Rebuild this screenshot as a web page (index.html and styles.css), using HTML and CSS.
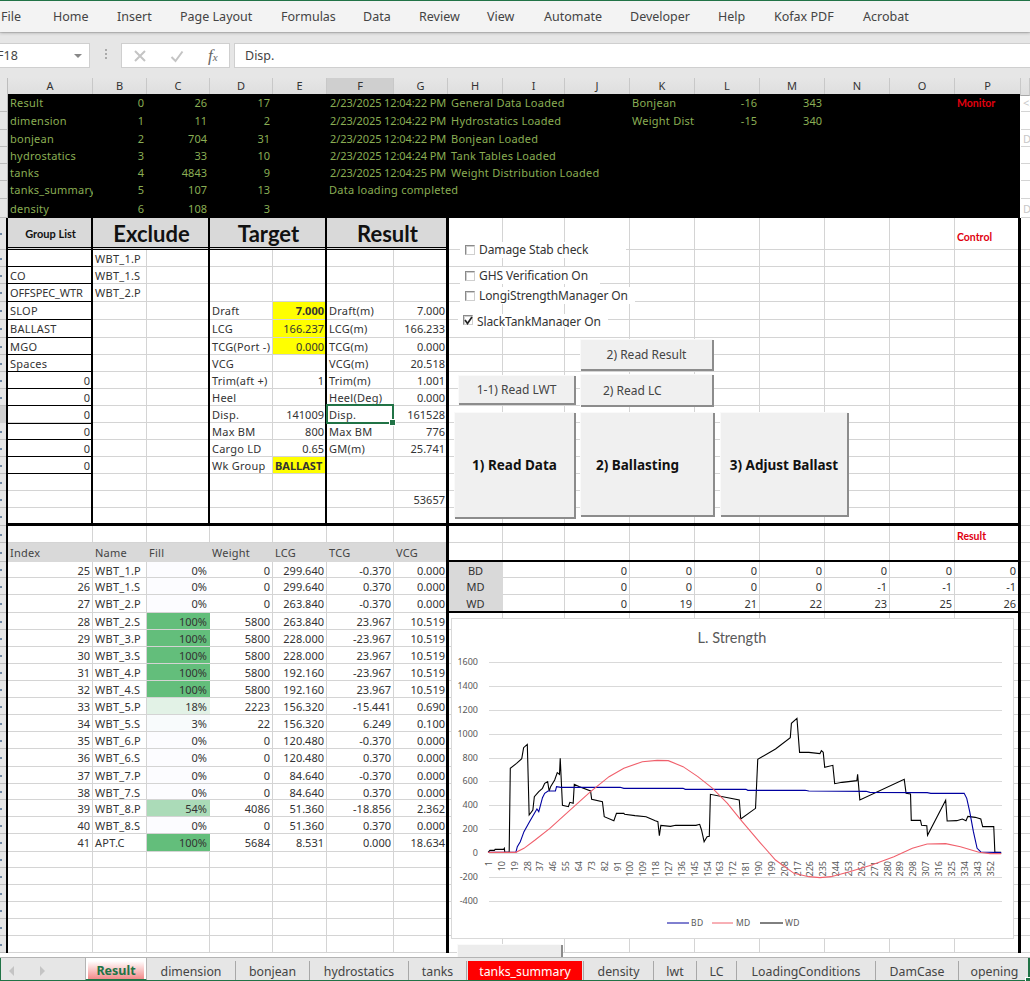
FILE: index.html
```html
<!DOCTYPE html>
<html lang="en">
<head>
<meta charset="utf-8">
<title>Result</title>
<link rel="stylesheet" href="styles.css">
</head>
<body>
<div class="page">
  <nav class="ribbon">
    <span class="rt t1">File</span><span class="rt t2">Home</span><span class="rt t3">Insert</span><span class="rt t4">Page Layout</span><span class="rt t5">Formulas</span><span class="rt t6">Data</span><span class="rt t7">Review</span><span class="rt t8">View</span><span class="rt t9">Automate</span><span class="rt t10">Developer</span><span class="rt t11">Help</span><span class="rt t12">Kofax PDF</span><span class="rt t13">Acrobat</span>
  </nav>
  <div class="fbar">
    <div class="namebox"><span class="nm">F18</span><i class="caret"></i></div>
    <div class="dots"></div>
    <div class="fxbox">
      <svg class="fxi" width="14" height="14" viewBox="0 0 14 14"><path d="M2 2L12 12M12 2L2 12" stroke="#c4c4c4" stroke-width="2" fill="none"/></svg>
      <svg class="fxi" width="14" height="14" viewBox="0 0 14 14"><path d="M1.500 8L5.500 12L12.500 2.500" stroke="#c4c4c4" stroke-width="2" fill="none"/></svg>
      <span class="fx">f<small>x</small></span>
    </div>
    <div class="finput">Disp.</div>
  </div>

  <div class="sheet">
    <div class="cols">
      <b class="corner"></b><b>A</b><b>B</b><b>C</b><b>D</b><b>E</b><b class="on">F</b><b>G</b><b>H</b><b>I</b><b>J</b><b>K</b><b>L</b><b>M</b><b>N</b><b>O</b><b>P</b><b></b>
    </div>

    <section class="monitor">
      <div class="row r18 k"><span class="a">Result</span><span class="b n">0</span><span class="c n">26</span><span class="d n">17</span><span class="f s2 dt">2/23/2025 12:04:22 PM</span><span class="h s3">General Data Loaded</span><span class="k1">Bonjean</span><span class="l n">-16</span><span class="m n">343</span><span class="p mon">Monitor</span><span class="q gh">&lt;I</span></div>
      <div class="row r18 k"><span class="a">dimension</span><span class="b n">1</span><span class="c n">11</span><span class="d n">2</span><span class="f s2 dt">2/23/2025 12:04:22 PM</span><span class="h s3">Hydrostatics Loaded</span><span class="k1">Weight Distribution</span><span class="l n">-15</span><span class="m n">340</span><span class="q"></span></div>
      <div class="row r17 k"><span class="a">bonjean</span><span class="b n">2</span><span class="c n">704</span><span class="d n">31</span><span class="f s2 dt">2/23/2025 12:04:22 PM</span><span class="h s3">Bonjean Loaded</span><span class="q gh">D</span></div>
      <div class="row r17 k"><span class="a">hydrostatics</span><span class="b n">3</span><span class="c n">33</span><span class="d n">10</span><span class="f s2 dt">2/23/2025 12:04:24 PM</span><span class="h s3">Tank Tables Loaded</span><span class="q"></span></div>
      <div class="row r17 k"><span class="a">tanks</span><span class="b n">4</span><span class="c n">4843</span><span class="d n">9</span><span class="f s2 dt">2/23/2025 12:04:25 PM</span><span class="h s4">Weight Distribution Loaded</span><span class="q"></span></div>
      <div class="row r18 k"><span class="a">tanks_summary</span><span class="b n">5</span><span class="c n">107</span><span class="d n">13</span><span class="f s3">Data loading completed</span><span class="q"></span></div>
      <div class="row r19 k"><span class="a">density</span><span class="b n">6</span><span class="c n">108</span><span class="d n">3</span><span class="q gh">D</span></div>
    </section>

    <div class="body">
      <section class="mid">
        <div class="row r32"><span class="a hd sm">Group List</span><span class="b s2 hd">Exclude</span><span class="d s2 hd">Target</span><span class="f s2 hd">Result</span><span class="p ctl">Control</span></div>
        <div class="row r17"><span class="a lb"></span><span class="b">WBT_1.P</span></div>
        <div class="row r17"><span class="a lb">CO</span><span class="b">WBT_1.S</span></div>
        <div class="row r18"><span class="a lb up">OFFSPEC_WTR</span><span class="b">WBT_2.P</span></div>
        <div class="row r18"><span class="a lb">SLOP</span><span class="d">Draft</span><span class="e n y st">7.000</span><span class="f">Draft(m)</span><span class="g n">7.000</span></div>
        <div class="row r18"><span class="a lb">BALLAST</span><span class="d">LCG</span><span class="e n y">166.237</span><span class="f">LCG(m)</span><span class="g n">166.233</span></div>
        <div class="row r17"><span class="a lb">MGO</span><span class="d">TCG(Port -)</span><span class="e n y">0.000</span><span class="f">TCG(m)</span><span class="g n">0.000</span></div>
        <div class="row r17"><span class="a lb">Spaces</span><span class="d">VCG</span><span class="f">VCG(m)</span><span class="g n">20.518</span></div>
        <div class="row r17"><span class="a lb n">0</span><span class="d">Trim(aft +)</span><span class="e n">1</span><span class="f">Trim(m)</span><span class="g n">1.001</span></div>
        <div class="row r17"><span class="a lb n">0</span><span class="d">Heel</span><span class="f">Heel(Deg)</span><span class="g n">0.000</span></div>
        <div class="row r17 sel"><span class="a lb n">0</span><span class="d">Disp.</span><span class="e n">141009</span><span class="f cur">Disp.</span><span class="g n">161528</span></div>
        <div class="row r17"><span class="a lb n">0</span><span class="d">Max BM</span><span class="e n">800</span><span class="f">Max BM</span><span class="g n">776</span></div>
        <div class="row r17"><span class="a lb n">0</span><span class="d">Cargo LD</span><span class="e n">0.65</span><span class="f">GM(m)</span><span class="g n">25.741</span></div>
        <div class="row r17"><span class="a lb n">0</span><span class="d">Wk Group</span><span class="e y st">BALLAST</span></div>
        <div class="row r17"></div>
        <div class="row r17"><span class="g n">53657</span></div>
        <div class="row r18"></div>
      </section>

      <section class="lower">
        <div class="row r17"><span class="p rd">Result</span></div>
        <div class="row r19"><span class="a gy">Index</span><span class="b gy">Name</span><span class="c gy">Fill</span><span class="d gy">Weight</span><span class="e gy">LCG</span><span class="f gy">TCG</span><span class="g gy">VCG</span><span class="h s9 bar"></span></div>
        <div class="row r16"><span class="a n">25</span><span class="b">WBT_1.P</span><span class="c n f0">0%</span><span class="d n">0</span><span class="e n">299.640</span><span class="f n">-0.370</span><span class="g n">0.000</span><span class="h gb">BD</span><span class="j n">0</span><span class="k2 n">0</span><span class="l n">0</span><span class="m n">0</span><span class="o1 n">0</span><span class="o n">0</span><span class="p n">0</span></div>
        <div class="row r17"><span class="a n">26</span><span class="b">WBT_1.S</span><span class="c n f0">0%</span><span class="d n">0</span><span class="e n">299.640</span><span class="f n">0.370</span><span class="g n">0.000</span><span class="h gb">MD</span><span class="j n">0</span><span class="k2 n">0</span><span class="l n">0</span><span class="m n">0</span><span class="o1 n">-1</span><span class="o n">-1</span><span class="p n">-1</span></div>
        <div class="row r18"><span class="a n">27</span><span class="b">WBT_2.P</span><span class="c n f0">0%</span><span class="d n">0</span><span class="e n">263.840</span><span class="f n">-0.370</span><span class="g n">0.000</span><span class="h gb">WD</span><span class="j n">0</span><span class="k2 n">19</span><span class="l n">21</span><span class="m n">22</span><span class="o1 n">23</span><span class="o n">25</span><span class="p n">26</span><span class="h s9 bar ov"></span></div>
        <div class="row r17"><span class="a n">28</span><span class="b">WBT_2.S</span><span class="c n f100">100%</span><span class="d n">5800</span><span class="e n">263.840</span><span class="f n">23.967</span><span class="g n">10.519</span></div>
        <div class="row r17"><span class="a n">29</span><span class="b">WBT_3.P</span><span class="c n f100">100%</span><span class="d n">5800</span><span class="e n">228.000</span><span class="f n">-23.967</span><span class="g n">10.519</span></div>
        <div class="row r17"><span class="a n">30</span><span class="b">WBT_3.S</span><span class="c n f100">100%</span><span class="d n">5800</span><span class="e n">228.000</span><span class="f n">23.967</span><span class="g n">10.519</span></div>
        <div class="row r17"><span class="a n">31</span><span class="b">WBT_4.P</span><span class="c n f100">100%</span><span class="d n">5800</span><span class="e n">192.160</span><span class="f n">-23.967</span><span class="g n">10.519</span></div>
        <div class="row r17"><span class="a n">32</span><span class="b">WBT_4.S</span><span class="c n f100">100%</span><span class="d n">5800</span><span class="e n">192.160</span><span class="f n">23.967</span><span class="g n">10.519</span></div>
        <div class="row r17"><span class="a n">33</span><span class="b">WBT_5.P</span><span class="c n f18">18%</span><span class="d n">2223</span><span class="e n">156.320</span><span class="f n">-15.441</span><span class="g n">0.690</span></div>
        <div class="row r17"><span class="a n">34</span><span class="b">WBT_5.S</span><span class="c n f3">3%</span><span class="d n">22</span><span class="e n">156.320</span><span class="f n">6.249</span><span class="g n">0.100</span></div>
        <div class="row r17"><span class="a n">35</span><span class="b">WBT_6.P</span><span class="c n f0">0%</span><span class="d n">0</span><span class="e n">120.480</span><span class="f n">-0.370</span><span class="g n">0.000</span></div>
        <div class="row r18"><span class="a n">36</span><span class="b">WBT_6.S</span><span class="c n f0">0%</span><span class="d n">0</span><span class="e n">120.480</span><span class="f n">0.370</span><span class="g n">0.000</span></div>
        <div class="row r17"><span class="a n">37</span><span class="b">WBT_7.P</span><span class="c n f0">0%</span><span class="d n">0</span><span class="e n">84.640</span><span class="f n">-0.370</span><span class="g n">0.000</span></div>
        <div class="row r16"><span class="a n">38</span><span class="b">WBT_7.S</span><span class="c n f0">0%</span><span class="d n">0</span><span class="e n">84.640</span><span class="f n">0.370</span><span class="g n">0.000</span></div>
        <div class="row r17"><span class="a n">39</span><span class="b">WBT_8.P</span><span class="c n f54">54%</span><span class="d n">4086</span><span class="e n">51.360</span><span class="f n">-18.856</span><span class="g n">2.362</span></div>
        <div class="row r17"><span class="a n">40</span><span class="b">WBT_8.S</span><span class="c n f0">0%</span><span class="d n">0</span><span class="e n">51.360</span><span class="f n">0.370</span><span class="g n">0.000</span></div>
        <div class="row r18"><span class="a n">41</span><span class="b">APT.C</span><span class="c n f100">100%</span><span class="d n">5684</span><span class="e n">8.531</span><span class="f n">0.000</span><span class="g n">18.634</span></div>
        <div class="row r16"></div>
        <div class="row r17"></div>
        <div class="row r17"></div>
        <div class="row r17"></div>
        <div class="row r17"></div>
        <div class="row r17"></div>
      </section>
    </div>

    <label class="chk c1"><i class="box"></i>Damage Stab check</label>
    <label class="chk c2"><i class="box"></i>GHS Verification On</label>
    <label class="chk c3"><i class="box"></i>LongiStrengthManager On</label>
    <label class="chk c4"><i class="box on"><svg width="9" height="9" viewBox="0 0 9 9"><path d="M1 4L3.500 7.500L8 1" stroke="#222" stroke-width="1.700" fill="none"/></svg></i>SlackTankManager On</label>

    <button class="btn b1">2) Read Result</button>
    <button class="btn b2">2) Read LC</button>
    <button class="btn b3">1-1) Read LWT</button>
    <button class="btn big b4">1) Read Data</button>
    <button class="btn big b5">2) Ballasting</button>
    <button class="btn big b6">3) Adjust Ballast</button>
    <button class="btn b7"></button>

    <figure class="chart">
      <svg width="563" height="321" viewBox="0 0 563 321">
        <g class="gl">
          <path d="M38 44H551M38 68H551M38 92H551M38 116H551M38 140H551M38 163H551M38 187H551M38 211H551M38 235H551M38 259H551M38 283H551"/>
        </g>
        <text class="ttl" x="281" y="25" text-anchor="middle">L. Strength</text>
        <g class="yl" text-anchor="end">
          <text x="27" y="47">1600</text><text x="27" y="71">1400</text><text x="27" y="95">1200</text><text x="27" y="119">1000</text><text x="27" y="143">800</text><text x="27" y="166">600</text><text x="27" y="190">400</text><text x="27" y="214">200</text><text x="27" y="238">0</text><text x="27" y="262">-200</text><text x="27" y="286">-400</text>
        </g>
        <g class="xl" text-anchor="end">
          <text transform="translate(41 243) rotate(-90)">1</text><text transform="translate(54 243) rotate(-90)">10</text><text transform="translate(67 243) rotate(-90)">19</text><text transform="translate(80 243) rotate(-90)">28</text><text transform="translate(92 243) rotate(-90)">37</text><text transform="translate(105 243) rotate(-90)">46</text><text transform="translate(118 243) rotate(-90)">55</text><text transform="translate(131 243) rotate(-90)">64</text><text transform="translate(144 243) rotate(-90)">73</text><text transform="translate(157 243) rotate(-90)">82</text><text transform="translate(170 243) rotate(-90)">91</text><text transform="translate(182 243) rotate(-90)">100</text><text transform="translate(195 243) rotate(-90)">109</text><text transform="translate(208 243) rotate(-90)">118</text><text transform="translate(221 243) rotate(-90)">127</text><text transform="translate(234 243) rotate(-90)">136</text><text transform="translate(247 243) rotate(-90)">145</text><text transform="translate(260 243) rotate(-90)">154</text><text transform="translate(272 243) rotate(-90)">163</text><text transform="translate(285 243) rotate(-90)">172</text><text transform="translate(298 243) rotate(-90)">181</text><text transform="translate(311 243) rotate(-90)">190</text><text transform="translate(324 243) rotate(-90)">199</text><text transform="translate(337 243) rotate(-90)">208</text><text transform="translate(350 243) rotate(-90)">217</text><text transform="translate(362 243) rotate(-90)">226</text><text transform="translate(375 243) rotate(-90)">235</text><text transform="translate(388 243) rotate(-90)">244</text><text transform="translate(401 243) rotate(-90)">253</text><text transform="translate(414 243) rotate(-90)">262</text><text transform="translate(427 243) rotate(-90)">271</text><text transform="translate(440 243) rotate(-90)">280</text><text transform="translate(452 243) rotate(-90)">289</text><text transform="translate(465 243) rotate(-90)">298</text><text transform="translate(478 243) rotate(-90)">307</text><text transform="translate(491 243) rotate(-90)">316</text><text transform="translate(504 243) rotate(-90)">325</text><text transform="translate(517 243) rotate(-90)">334</text><text transform="translate(530 243) rotate(-90)">343</text><text transform="translate(543 243) rotate(-90)">352</text>
        </g>
        <svg x="-1" y="-3" width="580" height="366" viewBox="0 0 1568 1098" preserveAspectRatio="none">
          <polyline class="ln" stroke="#000" points="103,712 108,706 120,706 122,703 145,703 147,700 148,712 160,712 163,460 180,445 194,431 199,398 209,388 214,600 224,585 228,545 240,530 250,520 256,505 264,500 268,528 272,515 283,495 290,473 296,478 298,430 304,571 320,575 324,562 333,565 336,508 350,515 380,528 383,553 412,560 417,605 443,617 450,595 470,595 472,598 500,602 530,605 555,617 562,620 566,662 570,631 596,634 610,631 665,631 675,628 680,645 687,680 695,665 701,664 704,538 782,555 786,612 826,580 832,433 880,402 920,368 923,325 938,310 945,412 970,412 1000,416 1004,407 1009,412 1013,457 1035,451 1040,506 1060,502 1100,497 1102,478 1108,555 1228,493 1233,535 1245,537 1247,616 1272,616 1275,631 1289,632 1291,661 1340,556 1344,618 1370,617 1385,612 1395,617 1400,604 1420,607 1435,612 1440,635 1470,635 1473,712 1490,712"/>
          <polyline class="ln" stroke="#0000a0" points="103,712 178,712 182,695 190,680 200,650 215,620 235,582 240,590 250,548 256,535 265,528 285,528 288,515 300,517 460,517 470,520 630,520 636,523 800,523 805,526 960,526 970,528 1125,529 1135,532 1290,533 1300,535 1390,535 1397,550 1405,590 1415,650 1425,700 1435,711 1490,713"/>
          <polyline class="ln" stroke="#f0606c" points="103,712 178,712 200,700 230,675 270,640 320,590 380,530 430,485 470,460 520,440 560,436 590,437 630,455 670,485 710,520 750,565 790,620 840,685 880,735 930,775 970,785 1000,788 1030,785 1080,770 1140,750 1200,725 1250,700 1290,687 1340,686 1380,695 1430,712 1460,716 1490,716"/>
        </svg>
        <g class="lg">
          <path d="M216 305H238" stroke="#0000a0"/><text x="240" y="308">BD</text>
          <path d="M261 305H282" stroke="#f0606c"/><text x="285" y="308">MD</text>
          <path d="M309 305H332" stroke="#000"/><text x="334" y="308">WD</text>
        </g>
      </svg>
    </figure>
  </div>

  <footer class="tabs">
    <i class="nav left"></i><i class="nav right"></i>
    <span class="tab cur">Result</span><span class="tab w1">dimension</span><span class="tab w2">bonjean</span><span class="tab w3">hydrostatics</span><span class="tab w4">tanks</span><span class="tab red">tanks_summary</span><span class="tab w5">density</span><span class="tab w6">lwt</span><span class="tab w7">LC</span><span class="tab w8">LoadingConditions</span><span class="tab w9">DamCase</span><span class="tab w10">opening</span>
  </footer>
</div>
</body>
</html>
```

FILE: styles.css
```css
* { box-sizing: border-box; }
html, body { margin: 0; padding: 0; background: #fff; }
.page { width: 1030px; height: 981px; overflow: hidden; display: flex; flex-direction: column; font-family: "Noto Sans", sans-serif; color: #333; }

/* ribbon */
.ribbon { height: 32px; flex: none; background: #f3f3f3; border-top: 1px solid #217346; box-shadow: 0 1px 3px rgba(0,0,0,.25); display: flex; align-items: center; font-size: 12.5px; color: #444; position: relative; z-index: 2; white-space: nowrap; }
.rt { display: block; flex: none; }
.t1 { width: 53px; padding-left: 1px; }
.t2 { width: 64px; }
.t3 { width: 63px; }
.t4 { width: 101px; }
.t5 { width: 82px; }
.t6 { width: 56px; }
.t7 { width: 68px; }
.t8 { width: 57px; }
.t9 { width: 86px; }
.t10 { width: 88px; }
.t11 { width: 56px; }
.t12 { width: 89px; }

/* formula bar */
.fbar { height: 46px; flex: none; background: #e6e6e6; border-top: 1px solid #d0d0d0; display: flex; align-items: flex-start; padding-top: 10px; }
.namebox { width: 90px; height: 25px; background: #fff; border: 1px solid #cfcfcf; border-left: 0; display: flex; align-items: center; font-size: 12.5px; color: #444; overflow: hidden; position: relative; }
.nm { margin-left: -3px; }
.caret { position: absolute; left: 74px; top: 10px; border: 4px solid transparent; border-top: 4px solid #888; border-bottom: 0; }
.dots { width: 2px; height: 12px; margin: 6px 14px 0 15px; background: repeating-linear-gradient(#aaa 0 2px, transparent 2px 4px); }
.fxbox { width: 109px; height: 25px; background: #fff; border: 1px solid #cfcfcf; display: flex; align-items: center; gap: 23px; padding-left: 11px; }
.fxi { flex: none; }
.fx { font-family: "Liberation Serif", serif; font-style: italic; font-size: 17px; color: #666; margin-left: 1px; }
.fx small { font-size: 11px; }
.finput { flex: 1; height: 25px; margin-left: 4px; background: #fff; border: 1px solid #cfcfcf; border-right: 0; font-size: 12.5px; line-height: 23px; padding-left: 10px; color: #444; }

/* sheet */
.sheet { flex: 1; position: relative; overflow: hidden; font-size: 11px; line-height: 16px; }
.cols, .row { display: grid; width: 1030px; grid-template-columns: [r] 8px [a] 85px [b] 54px [c] 63px [d] 63px [e] 54px [f] 67px [g] 54px [h] 55px [i] 62px [j] 65px [k] 65px [l] 65px [m] 65px [n] 65px [o] 65px [p] 66px [q] 9px; }
.cols { height: 16px; background: #e6e6e6; }
.cols b { font-weight: 400; font-size: 11px; line-height: 16px; text-align: center; color: #333; border-right: 1px solid #c8c8c8; border-bottom: 1px solid #a8a8a8; background: linear-gradient(#e6e6e6, #dedede); }
.cols .corner { background: #e6e6e6; border-right: 1px solid #bdbdbd; }
.cols .on { background: #cfcfcf; border-bottom: 2px solid #217346; }

.monitor, .body { background-color: #fff; }
.body { position: relative; background-image: linear-gradient(#d4d4d4,#d4d4d4), linear-gradient(#d4d4d4,#d4d4d4), linear-gradient(#d4d4d4,#d4d4d4), linear-gradient(#d4d4d4,#d4d4d4), linear-gradient(#d4d4d4,#d4d4d4), linear-gradient(#d4d4d4,#d4d4d4), linear-gradient(#d4d4d4,#d4d4d4), linear-gradient(#d4d4d4,#d4d4d4), linear-gradient(#d4d4d4,#d4d4d4), linear-gradient(#d4d4d4,#d4d4d4), linear-gradient(#d4d4d4,#d4d4d4), linear-gradient(#d4d4d4,#d4d4d4), linear-gradient(#d4d4d4,#d4d4d4), linear-gradient(#d4d4d4,#d4d4d4), linear-gradient(#d4d4d4,#d4d4d4); background-repeat: no-repeat; background-size: 1px 100%; background-position: 92px 0, 146px 0, 209px 0, 272px 0, 326px 0, 393px 0, 447px 0, 502px 0, 564px 0, 629px 0, 694px 0, 759px 0, 824px 0, 889px 0, 954px 0; }
.body::after { content: ""; position: absolute; inset: 0; pointer-events: none; background-image: linear-gradient(#000,#000), linear-gradient(#000,#000), linear-gradient(#000,#000); background-repeat: no-repeat; background-size: 2px 100%, 3px 100%, 3px 100%; background-position: 6px 0, 446px 0, 1018px 0; }
.mid { position: relative; }
.mid::after { content: ""; position: absolute; inset: 0; pointer-events: none; z-index: 1; background-image: linear-gradient(#000,#000), linear-gradient(#000,#000), linear-gradient(#000,#000), linear-gradient(#000,#000); background-repeat: no-repeat; background-size: 2px 100%, 2px 100%, 2px 100%, 1015px 3px; background-position: 91px 0, 208px 0, 325px 0, 6px 100%; }

.row { border-bottom: 1px solid #d4d4d4; position: relative; }
.row::before { content: ""; grid-column: r; grid-row: 1; background: linear-gradient(#7089a6,#7089a6) 0 50% / 2px 2px no-repeat #e6e6e6; border-right: 1px solid #b8b8b8; margin-bottom: -1px; box-shadow: inset 0 -1px 0 #bdbdbd; }
.r16 { height: 16px; }
.r17 { height: 17px; }
.r18 { height: 18px; }
.r19 { height: 19px; }
.r32 { height: 32px; }

.row > span { grid-row: 1; display: block; overflow: hidden; white-space: nowrap; padding: 1px 2px 0; align-self: stretch; line-height: 16px; letter-spacing: .25px; }
.row.r19 > span { padding-top: 2px; }
.a { grid-column-start: a; }
.b { grid-column-start: b; }
.c { grid-column-start: c; }
.d { grid-column-start: d; }
.e { grid-column-start: e; }
.f { grid-column-start: f; }
.g { grid-column-start: g; }
.h { grid-column-start: h; }
.j { grid-column-start: j; }
.k1, .k2 { grid-column-start: k; }
.l { grid-column-start: l; }
.m { grid-column-start: m; }
.o1 { grid-column-start: n; }
.o { grid-column-start: o; }
.p { grid-column-start: p; }
.q { grid-column-start: q; }
.s2 { grid-column-end: span 2; }
.s3 { grid-column-end: span 3; }
.s4 { grid-column-end: span 4; }
.s9 { grid-column-end: span 9; }
.row > .n { text-align: right; letter-spacing: 0; padding-right: 3px; }
.row > .p.n { padding-right: 5px; }
.row > .dt { letter-spacing: -.1px; padding-left: 3px; }
.row > .up { letter-spacing: -.1px; }
.k > .h { padding-left: 3px; }

/* black monitor block */
.k { border-bottom: 0; color: #8aae54; background: linear-gradient(#000,#000) 0 0 / 1020px 100% no-repeat; }
.k::before { background: #e6e6e6; margin-bottom: 0; }
.row > .q { padding: 1px 0 0 2px; }
.k .q { border-bottom: 1px solid #d4d4d4; color: #c8c8c8; }
.row > .mon, .row > .ctl, .row > .rd { font-family: Lato, sans-serif; font-weight: 700; font-size: 10.500px; color: #e0000f; padding-left: 2px; letter-spacing: 0; }
.row > .ctl { line-height: 36px; }
.row > .rd { padding-top: 2px; }

/* headed block */
.row > .hd { background: #d9d9d9; font-family: Lato, sans-serif; font-weight: 700; font-size: 22px; line-height: 29px; color: #111; text-align: center; border-bottom: 3px double #000; margin-bottom: -1px; padding-top: 1px; letter-spacing: 0; }
.row > .sm { font-size: 11px; }
.lb { border-bottom: 1px solid #000; margin-bottom: -1px; color: #333; }
.y { background: #ff0; }
.row > .st { font-weight: 700; letter-spacing: 0; }
.sel::before { background: #cfcfcf; border-right: 1px solid #217346; }
.row > .cur { overflow: visible; position: relative; }
.cur::after { content: ""; position: absolute; inset: -2px 0 -1px -1px; border: 2px solid #217346; z-index: 3; }
.cur::before { content: ""; position: absolute; right: -2px; bottom: -3px; width: 5px; height: 5px; background: #217346; border: 1px solid #fff; z-index: 4; }

/* lower block */
.row > .gy { background: #d9d9d9; color: #444; margin-bottom: -1px; line-height: 16px; }
.row > .gb { background: #d9d9d9; text-align: center; margin-bottom: -1px; letter-spacing: 0; }
.row > .bar { box-shadow: 0 1px 0 #000; border-bottom: 1px solid #000; height: 100%; padding: 0; background: none; }
.row > .ov { height: 100%; }
.f0 { background: #fcfcff; }
.f3 { background: #f8fbfc; }
.f18 { background: #e2f2e6; }
.f54 { background: #abdbb8; }
.f100 { background: #63be7b; }

/* form controls over the sheet */
.chk { position: absolute; display: flex; align-items: center; gap: 4px; background: #fff; font-size: 12px; line-height: 16px; letter-spacing: -.1px; color: #333; padding-left: 5px; white-space: nowrap; overflow: hidden; z-index: 5; }
.c1 { left: 460px; top: 164px; width: 166px; height: 16px; }
.c2 { left: 460px; top: 189px; width: 140px; height: 17px; }
.c3 { left: 460px; top: 209px; width: 175px; height: 17px; }
.c4 { left: 458px; top: 236px; width: 150px; height: 13px; align-items: flex-start; }
.box { flex: none; width: 10px; height: 10px; display: block; background: #fff; border: 1px solid #8a8a8a; border-right-color: #cfcfcf; border-bottom-color: #cfcfcf; box-shadow: inset 1px 1px 0 #cfcfcf; line-height: 0; }
.box.on { margin-top: 1px; }
.box svg { display: block; }

.btn { position: absolute; z-index: 5; background: #f0f0f0; border: 0; border-right: 2px solid #8c8c8c; border-bottom: 2px solid #8c8c8c; box-shadow: -1px -1px 0 #fafafa; font-family: "Noto Sans", sans-serif; font-size: 12px; color: #444; padding: 0; }
.big { font-weight: 700; font-size: 13.500px; color: #111; }
.b1 { left: 581px; top: 262px; width: 133px; height: 31px; }
.b2 { left: 581px; top: 297px; width: 133px; height: 32px; text-align: left; padding-left: 22px; }
.b3 { left: 459px; top: 298px; width: 117px; height: 29px; }
.b4 { left: 455px; top: 335px; width: 121px; height: 106px; }
.b5 { left: 581px; top: 335px; width: 134px; height: 104px; text-align: left; padding-left: 15px; padding-top: 2px; }
.b6 { left: 721px; top: 335px; width: 128px; height: 104px; padding-top: 2px; }
.b7 { left: 458px; top: 867px; width: 105px; height: 14px; background: #ececec; border-bottom: 0; }

.chart { position: absolute; left: 451px; top: 540px; width: 563px; height: 321px; margin: 0; background: #fff; border: 1px solid #d9d9d9; z-index: 5; overflow: hidden; }
.chart > svg { display: block; margin: -1px; overflow: hidden; font-family: "Noto Sans", sans-serif; }
.gl path { stroke: #d9d9d9; stroke-width: 1; fill: none; shape-rendering: crispEdges; }
.ttl { font-family: Lato, sans-serif; font-size: 14.500px; fill: #595959; }
.yl text { font-size: 9px; fill: #595959; }
.xl text { font-size: 9px; fill: #595959; }
.ln { fill: none; stroke-width: 1.100; vector-effect: non-scaling-stroke; }
.lg path { stroke-width: 1; fill: none; }
.lg text { font-size: 8.500px; letter-spacing: .4px; fill: #595959; }

/* sheet tabs */
.tabs { height: 24px; flex: none; background: #e6e6e6; border-top: 1px solid #b4b4b4; display: flex; align-items: stretch; font-size: 12.300px; color: #444; position: relative; padding-left: 85px; white-space: nowrap; overflow: hidden; }
.nav { position: absolute; top: 8px; border: 5px solid transparent; }
.nav.left { left: 9px; border-left: 0; border-right: 5px solid #c4c4c4; }
.nav.right { left: 40px; border-right: 0; border-left: 5px solid #c4c4c4; }
.tab { flex: none; display: block; text-align: center; line-height: 21px; margin-top: 3px; border-right: 1px solid #a8a8a8; height: 20px; }
.tab.cur { width: 62px; height: 24px; margin-top: -1px; color: #217346; font-weight: 700; font-size: 12.500px; line-height: 23px; border: 0; border-left: 1px solid #b4b4b4; border-right: 1px solid #b4b4b4; border-bottom: 2px solid #217346; background: linear-gradient(#fff 10%, #f28a8a) content-box, #fff; padding: 2px 2px 0; }
.tab.w1 { width: 89px; }
.tab.w2 { width: 74px; }
.tab.w3 { width: 99px; }
.tab.w4 { width: 58px; }
.tab.red { width: 114px; margin-left: 1px; margin-top: 3px; height: 21px; background: #f00; color: #fff; border: 0; }
.tab.w5 { width: 71px; margin-left: 1px; border-left: 1px solid #a8a8a8; }
.tab.w6 { width: 43px; }
.tab.w7 { width: 40px; }
.tab.w8 { width: 139px; }
.tab.w9 { width: 83px; }
.tab.w10 { width: 72px; }
```
